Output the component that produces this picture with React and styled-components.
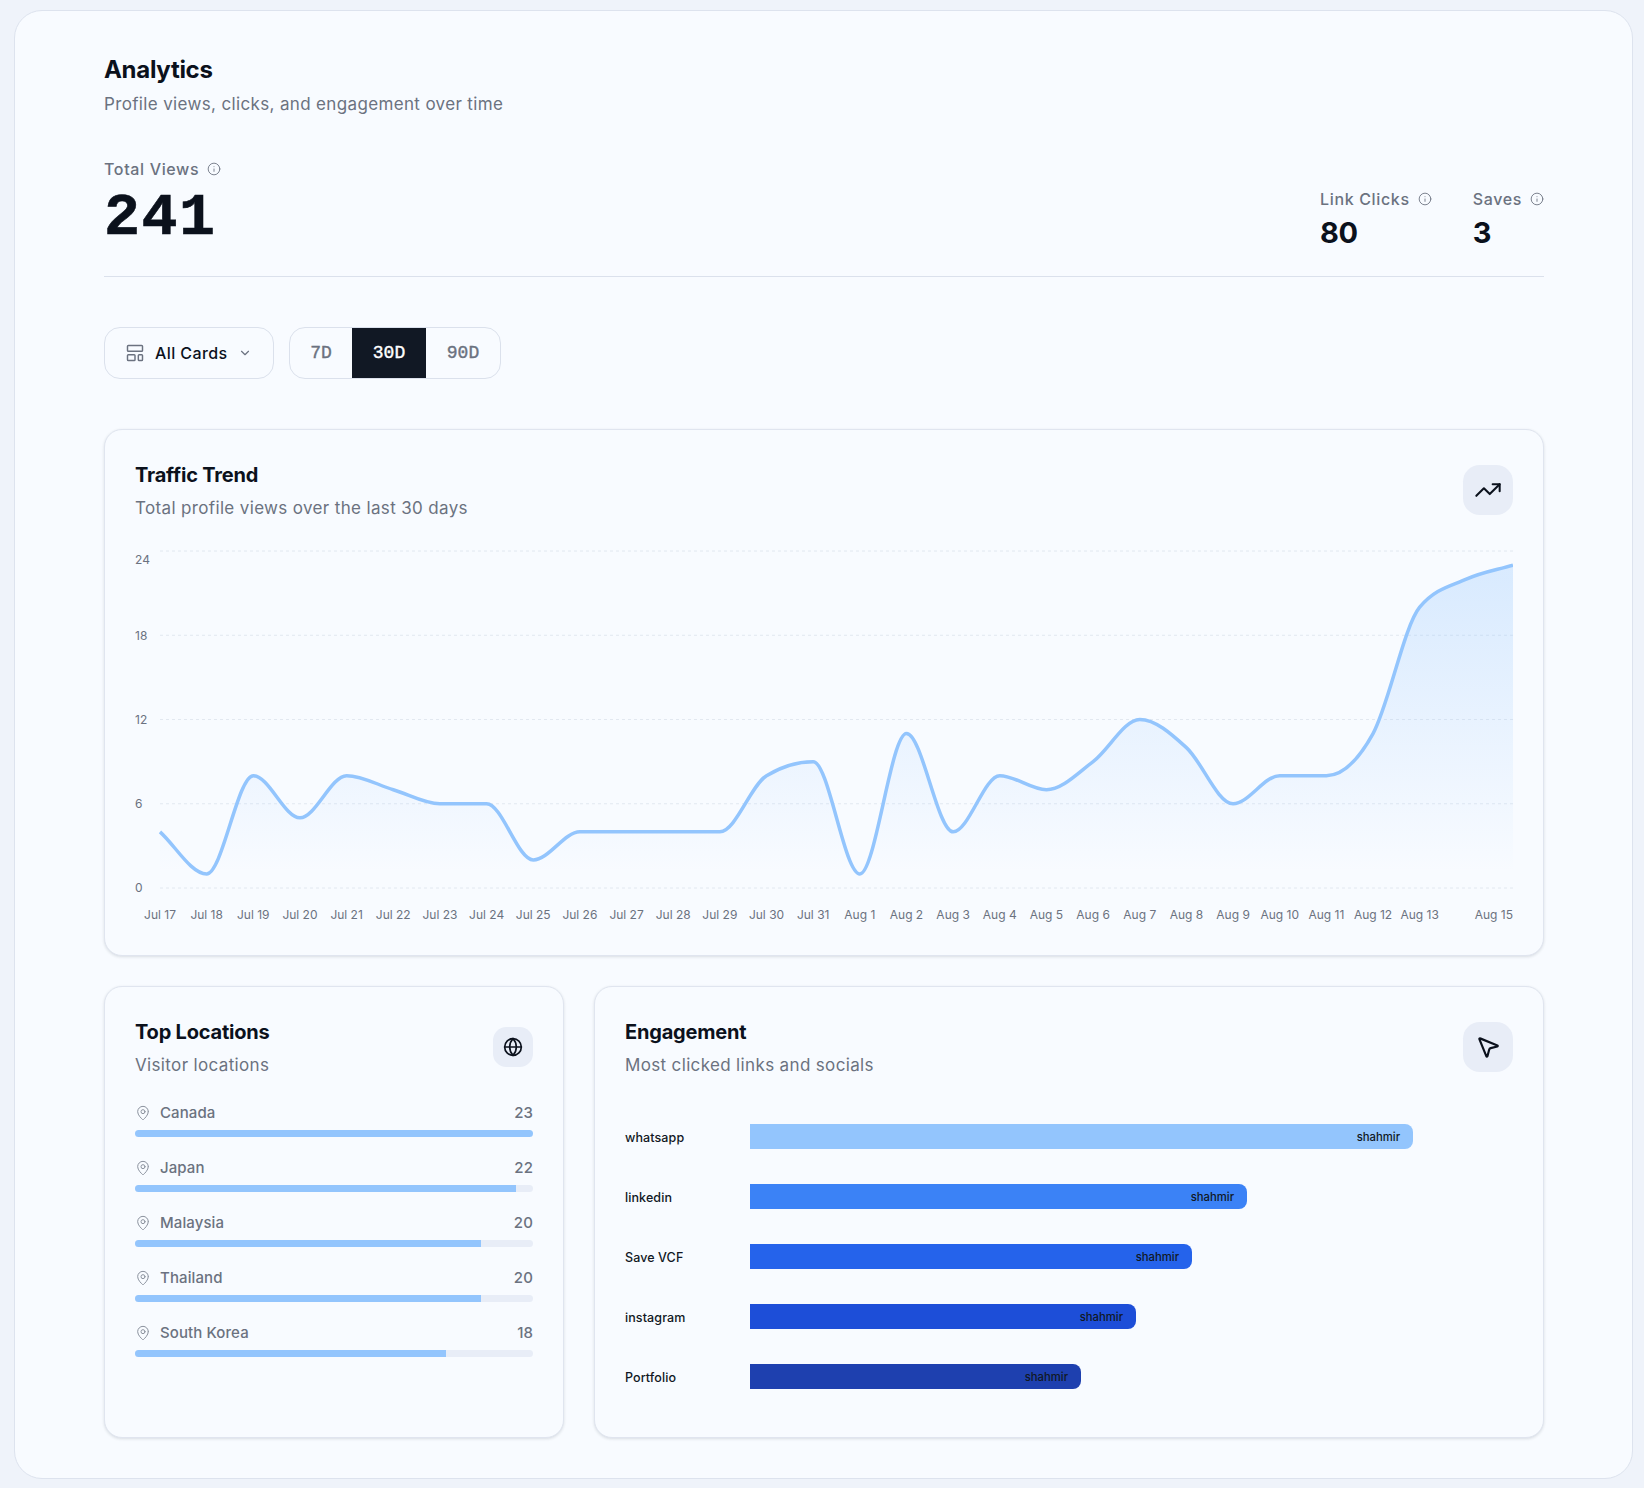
import React from "react";
import styled, { createGlobalStyle } from "styled-components";
import {
  ChevronDown,
  Globe,
  Info,
  LayoutTemplate,
  MapPin,
  MousePointer2,
  TrendingUp
} from "lucide-react";

const GlobalStyle = createGlobalStyle`
  * { box-sizing: border-box; }
  html, body { margin: 0; padding: 0; }
  body {
    background: #eff3fa;
    font-family: Inter, "Noto Sans", sans-serif;
    color: #0b111c;
  }
`;

const Page = styled.div`
  padding: 10px 11px 10px 14px;
`;
const Panel = styled.main`
  background: #f8fbff;
  border: 1px solid #dde3ee;
  border-radius: 28px;
  padding: 43px 88px 40px 89px;
`;
const Title = styled.h1`
  margin: 0;
  font-size: 24px;
  line-height: 32px;
  font-weight: 700;
  letter-spacing: -0.3px;
`;
const Subtitle = styled.p`
  margin: 6px 0 0;
  font-size: 17px;
  line-height: 24px;
  letter-spacing: 0.35px;
  color: #6b7280;
`;
const StatsRow = styled.section`
  display: flex;
  justify-content: space-between;
  align-items: flex-end;
  margin-top: 41px;
  padding-bottom: 30px;
  border-bottom: 1px solid #dbe1ec;
`;
const SideStats = styled.div`
  display: flex;
  gap: 41px;
`;
const StatLabel = styled.div`
  display: flex;
  align-items: center;
  gap: 8px;
  font-size: 16px;
  line-height: 24px;
  font-weight: 500;
  letter-spacing: 0.65px;
  color: #6b7280;
`;
const BigValue = styled.div`
  margin-top: 9px;
  font-family: "Liberation Mono", monospace;
  font-size: 60px;
  line-height: 56px;
  letter-spacing: 1.5px;
  font-weight: 700;
  -webkit-text-stroke: 0.6px currentColor;
`;
const SmallValue = styled.div`
  margin-top: 8px;
  font-size: 29px;
  line-height: 27px;
  letter-spacing: -0.3px;
  font-weight: 700;
`;
const Filters = styled.div`
  display: flex;
  gap: 15px;
  margin-top: 50px;
`;
const CardSelect = styled.button`
  display: flex;
  align-items: center;
  width: 170px;
  height: 52px;
  padding: 0 0 0 20px;
  background: transparent;
  border: 1px solid #dbe1ec;
  border-radius: 16px;
  font: 500 16px Inter, sans-serif;
  letter-spacing: 0.4px;
  color: #0b111c;
  svg:first-child { color: #6b7280; margin-right: 10px; }
  svg:last-child { color: #6b7280; margin-left: 11px; }
`;
const Segments = styled.div`
  display: flex;
  height: 52px;
  border: 1px solid #dbe1ec;
  border-radius: 16px;
  overflow: hidden;
`;
const Segment = styled.button`
  width: ${p => p.$width}px;
  border: 0;
  padding: 0;
  background: ${p => (p.$active ? "#111824" : "transparent")};
  color: ${p => (p.$active ? "#ffffff" : "#6b7280")};
  font: 400 18px "Liberation Mono", monospace;
  -webkit-text-stroke: 0.4px currentColor;
`;
const Card = styled.section`
  background: #f8fbff;
  border: 1px solid #e0e5ef;
  border-radius: 18px;
  box-shadow: 0 1px 3px rgba(30, 41, 59, 0.14);
  padding: 31px 30px ${p => p.$bottom}px;
`;
const TrendCard = styled(Card)`
  margin-top: 50px;
`;
const CardHead = styled.header`
  display: flex;
  justify-content: space-between;
  align-items: center;
`;
const CardTitle = styled.h2`
  margin: 0;
  font-size: 20px;
  line-height: 28px;
  font-weight: 700;
  letter-spacing: -0.2px;
`;
const CardSub = styled.p`
  margin: 7px 0 0;
  font-size: 17px;
  line-height: 24px;
  letter-spacing: 0.35px;
  color: #6b7280;
`;
const IconBox = styled.div`
  display: flex;
  align-items: center;
  justify-content: center;
  width: ${p => p.$size}px;
  height: ${p => p.$size}px;
  margin-bottom: 1px;
  border-radius: ${p => p.$size / 3}px;
  background: #e8edf7;
  color: #0b111c;
`;
const ChartSvg = styled.svg`
  display: block;
  width: 1378px;
  height: 390px;
  margin-top: 21px;
`;
const AxisText = styled.text`
  font-family: Inter, sans-serif;
  font-size: 12px;
  fill: #6b7280;
  dominant-baseline: middle;
`;
const BottomGrid = styled.div`
  display: grid;
  grid-template-columns: 460px 1fr;
  gap: 30px;
  margin-top: 30px;
`;
const LocationList = styled.ul`
  list-style: none;
  margin: 24px 0 0;
  padding: 0;
  display: flex;
  flex-direction: column;
  gap: 19px;
`;
const LocationHead = styled.div`
  display: flex;
  align-items: center;
  font-size: 15px;
  line-height: 24px;
  font-weight: 500;
  letter-spacing: 0.1px;
  color: #6b7280;
  svg { margin-right: 9px; color: #8b929e; }
  span:last-child { margin-left: auto; }
`;
const Track = styled.div`
  height: 7px;
  margin-top: 5px;
  border-radius: 4px;
  background: #e8edf7;
  overflow: hidden;
`;
const TrackFill = styled.div`
  height: 100%;
  width: ${p => p.$pct}%;
  background: #93c5fd;
`;
const BarList = styled.div`
  display: flex;
  flex-direction: column;
  gap: 35px;
  margin-top: 47px;
`;
const BarRow = styled.div`
  display: flex;
  align-items: center;
  height: 25px;
`;
const BarLabel = styled.div`
  width: 125px;
  padding-top: 2px;
  font-size: 12.5px;
  font-weight: 500;
  letter-spacing: 0.1px;
  color: #111824;
`;
const Bar = styled.div`
  display: flex;
  align-items: center;
  justify-content: flex-end;
  width: ${p => p.$width}px;
  height: 25px;
  padding-right: 13px;
  border-radius: 0 8px 8px 0;
  background: ${p => p.$color};
  font-size: 11.3px;
  font-weight: 500;
  color: #111824;
`;

const values = [
  4, 1, 8, 5, 8, 7, 6, 6, 2, 4, 4, 4, 4, 8, 9, 1, 11, 4, 8, 7, 9, 12, 10, 6, 8,
  8, 11, 20, 22, 23
];
const days = [
  "Jul 17", "Jul 18", "Jul 19", "Jul 20", "Jul 21", "Jul 22", "Jul 23", "Jul 24",
  "Jul 25", "Jul 26", "Jul 27", "Jul 28", "Jul 29", "Jul 30", "Jul 31", "Aug 1",
  "Aug 2", "Aug 3", "Aug 4", "Aug 5", "Aug 6", "Aug 7", "Aug 8", "Aug 9",
  "Aug 10", "Aug 11", "Aug 12", "Aug 13", "", "Aug 15"
];
const locations = [
  { name: "Canada", count: 23 },
  { name: "Japan", count: 22 },
  { name: "Malaysia", count: 20 },
  { name: "Thailand", count: 20 },
  { name: "South Korea", count: 18 }
];
const links = [
  { name: "whatsapp", width: 663, color: "#93c5fd" },
  { name: "linkedin", width: 497, color: "#3b82f6" },
  { name: "Save VCF", width: 442, color: "#2563eb" },
  { name: "instagram", width: 386, color: "#1d4ed8" },
  { name: "Portfolio", width: 331, color: "#1e40af" }
];

const chartLeft = 25;
const chartRight = 1378;
const zeroY = 347;
const stepX = (chartRight - chartLeft) / (values.length - 1);
const toX = i => chartLeft + i * stepX;
const toY = v => zeroY - v * 14.04;

// monotone cubic through the points, same shape as d3 curveMonotoneX
const monotonePath = pts => {
  const n = pts.length;
  const slopes = [];
  for (let i = 0; i < n - 1; i++) {
    slopes.push((pts[i + 1][1] - pts[i][1]) / (pts[i + 1][0] - pts[i][0]));
  }
  const sign = v => (v < 0 ? -1 : 1);
  const tangents = pts.map((_, i) => {
    if (i === 0) return (3 * slopes[0] - (slopes[0] + slopes[0]) / 2) / 2;
    if (i === n - 1) return (3 * slopes[n - 2] - (slopes[n - 2] + slopes[n - 2]) / 2) / 2;
    const a = slopes[i - 1];
    const b = slopes[i];
    const p = (a + b) / 2;
    return (sign(a) + sign(b)) * Math.min(Math.abs(a), Math.abs(b), 0.5 * Math.abs(p)) || 0;
  });
  let d = `M${pts[0][0]},${pts[0][1]}`;
  for (let i = 0; i < n - 1; i++) {
    const dx = (pts[i + 1][0] - pts[i][0]) / 3;
    d += `C${pts[i][0] + dx},${pts[i][1] + dx * tangents[i]},${pts[i + 1][0] - dx},${pts[i + 1][1] - dx * tangents[i + 1]},${pts[i + 1][0]},${pts[i + 1][1]}`;
  }
  return d;
};

const linePath = monotonePath(values.map((v, i) => [toX(i), toY(v)]));
const areaPath = `${linePath}L${chartRight},${zeroY}L${chartLeft},${zeroY}Z`;

const TrendChart = () => (
  <ChartSvg viewBox="0 0 1378 390">
    <defs>
      <linearGradient id="trendFill" x1="0" y1="0" x2="0" y2="1">
        <stop offset="5%" stopColor="#93c5fd" stopOpacity="0.3" />
        <stop offset="95%" stopColor="#93c5fd" stopOpacity="0" />
      </linearGradient>
    </defs>
    {[24, 18, 12, 6, 0].map(v => (
      <line
        key={v}
        x1={chartLeft}
        x2={chartRight}
        y1={toY(v)}
        y2={toY(v)}
        stroke="#e2e8f0"
        strokeDasharray="3 3"
      />
    ))}
    <path d={areaPath} fill="url(#trendFill)" />
    <path d={linePath} fill="none" stroke="#93c5fd" strokeWidth="3.5" />
    {[24, 18, 12, 6, 0].map(v => (
      <AxisText key={v} x="0" y={v === 24 ? 20 : toY(v) + 1}>
        {v}
      </AxisText>
    ))}
    {days.map((day, i) => (
      <AxisText
        key={i}
        x={toX(i)}
        y="375"
        textAnchor={i === days.length - 1 ? "end" : "middle"}
      >
        {day}
      </AxisText>
    ))}
  </ChartSvg>
);

const App = () => (
  <Page>
    <GlobalStyle />
    <Panel>
      <Title>Analytics</Title>
      <Subtitle>Profile views, clicks, and engagement over time</Subtitle>

      <StatsRow>
        <div>
          <StatLabel>
            Total Views <Info size={14} strokeWidth={1.5} />
          </StatLabel>
          <BigValue>241</BigValue>
        </div>
        <SideStats>
          <div>
            <StatLabel>
              Link Clicks <Info size={14} strokeWidth={1.5} />
            </StatLabel>
            <SmallValue>80</SmallValue>
          </div>
          <div>
            <StatLabel>
              Saves <Info size={14} strokeWidth={1.5} />
            </StatLabel>
            <SmallValue>3</SmallValue>
          </div>
        </SideStats>
      </StatsRow>

      <Filters>
        <CardSelect>
          <LayoutTemplate size={20} strokeWidth={1.75} />
          All Cards
          <ChevronDown size={14} />
        </CardSelect>
        <Segments>
          <Segment $width={62}>7D</Segment>
          <Segment $width={74} $active>
            30D
          </Segment>
          <Segment $width={74}>90D</Segment>
        </Segments>
      </Filters>

      <TrendCard $bottom={24}>
        <CardHead>
          <div>
            <CardTitle>Traffic Trend</CardTitle>
            <CardSub>Total profile views over the last 30 days</CardSub>
          </div>
          <IconBox $size={50}>
            <TrendingUp size={28} strokeWidth={1.75} />
          </IconBox>
        </CardHead>
        <TrendChart />
      </TrendCard>

      <BottomGrid>
        <Card $bottom={48}>
          <CardHead>
            <div>
              <CardTitle>Top Locations</CardTitle>
              <CardSub>Visitor locations</CardSub>
            </div>
            <IconBox $size={40}>
              <Globe size={20} />
            </IconBox>
          </CardHead>
          <LocationList>
            {locations.map(loc => (
              <li key={loc.name}>
                <LocationHead>
                  <MapPin size={16} strokeWidth={1.5} />
                  <span>{loc.name}</span>
                  <span>{loc.count}</span>
                </LocationHead>
                <Track>
                  <TrackFill $pct={(loc.count / 23) * 100} />
                </Track>
              </li>
            ))}
          </LocationList>
        </Card>

        <Card $bottom={48}>
          <CardHead>
            <div>
              <CardTitle>Engagement</CardTitle>
              <CardSub>Most clicked links and socials</CardSub>
            </div>
            <IconBox $size={50}>
              <MousePointer2 size={26} />
            </IconBox>
          </CardHead>
          <BarList>
            {links.map(link => (
              <BarRow key={link.name}>
                <BarLabel>{link.name}</BarLabel>
                <Bar $width={link.width} $color={link.color}>
                  shahmir
                </Bar>
              </BarRow>
            ))}
          </BarList>
        </Card>
      </BottomGrid>
    </Panel>
  </Page>
);

export default App;
